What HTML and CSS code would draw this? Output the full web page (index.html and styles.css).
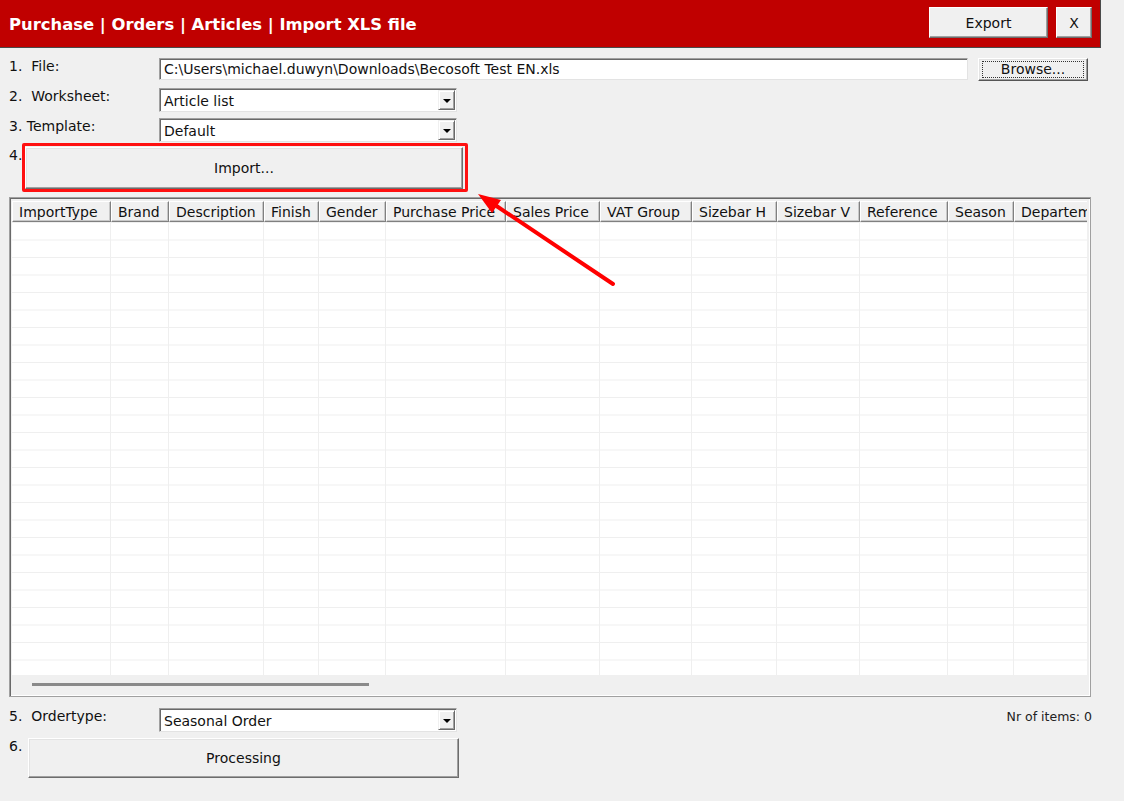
FILE: index.html
```html
<!DOCTYPE html>
<html>

<head>
  <meta charset="utf-8">
  <title>Import XLS file</title>
  <link rel="stylesheet" href="styles.css">
</head>

<body>
  <div class="titlebar">
    <h1 class="title">Purchase | Orders | Articles | Import XLS file</h1>
    <button class="btn btn-export">Export</button>
    <button class="btn btn-close">X</button>
  </div>

  <div class="row row-file">
    <span class="label">1.  File:</span>
    <div class="input input-file">C:\Users\michael.duwyn\Downloads\Becosoft Test EN.xls</div>
    <button class="btn btn-browse"><span class="focus">Browse...</span></button>
  </div>

  <div class="row row-sheet">
    <span class="label">2.  Worksheet:</span>
    <div class="combo"><span class="combo-text">Article list</span><span class="combo-btn"></span></div>
  </div>

  <div class="row row-template">
    <span class="label">3. Template:</span>
    <div class="combo"><span class="combo-text">Default</span><span class="combo-btn"></span></div>
  </div>

  <div class="row row-import">
    <span class="label label-short">4.</span>
    <div class="highlight">
      <button class="btn btn-import">Import...</button>
    </div>
  </div>

  <div class="grid">
    <div class="grid-head">
      <div class="hcell" style="width:99px">ImportType</div>
      <div class="hcell" style="width:58px">Brand</div>
      <div class="hcell" style="width:95px">Description</div>
      <div class="hcell" style="width:55px">Finish</div>
      <div class="hcell" style="width:67px">Gender</div>
      <div class="hcell" style="width:120px">Purchase Price</div>
      <div class="hcell" style="width:94px">Sales Price</div>
      <div class="hcell" style="width:92px">VAT Group</div>
      <div class="hcell" style="width:85px">Sizebar H</div>
      <div class="hcell" style="width:83px">Sizebar V</div>
      <div class="hcell" style="width:88px">Reference</div>
      <div class="hcell" style="width:66px">Season</div>
      <div class="hcell" style="width:100px">Departement</div>
    </div>
    <div class="grid-body">
      <div class="col" style="width:99px"></div>
      <div class="col" style="width:58px"></div>
      <div class="col" style="width:95px"></div>
      <div class="col" style="width:55px"></div>
      <div class="col" style="width:67px"></div>
      <div class="col" style="width:120px"></div>
      <div class="col" style="width:94px"></div>
      <div class="col" style="width:92px"></div>
      <div class="col" style="width:85px"></div>
      <div class="col" style="width:83px"></div>
      <div class="col" style="width:88px"></div>
      <div class="col" style="width:66px"></div>
      <div class="col" style="width:100px"></div>
    </div>
    <div class="grid-scroll">
      <div class="thumb"></div>
    </div>
  </div>

  <div class="row row-order">
    <span class="label">5.  Ordertype:</span>
    <div class="combo"><span class="combo-text">Seasonal Order</span><span class="combo-btn"></span></div>
    <span class="count">Nr of items: 0</span>
  </div>

  <div class="row row-process">
    <span class="label label-short">6.</span>
    <button class="btn btn-process">Processing</button>
  </div>

  <!-- annotation arrow drawn over the screen -->
  <svg class="arrow" width="1124" height="801" viewBox="0 0 1124 801">
    <line x1="613" y1="284" x2="495" y2="205" stroke="#f00" stroke-width="4" stroke-linecap="round" />
    <polygon points="478,194 501,200 492,213" fill="#f00" />
  </svg>
</body>
</html>
```

FILE: styles.css
```css
body {
  margin: 0;
  width: 1124px;
  height: 801px;
  overflow: hidden;
  position: relative;
  background: #f0f0f0;
  font-family: "DejaVu Sans", Verdana, sans-serif;
  font-size: 14px;
  color: #111;
}

.titlebar {
  display: flex;
  align-items: center;
  box-sizing: border-box;
  width: 1101px;
  height: 48px;
  padding-right: 8px;
  background: #c00000;
  border-right: 1px solid #4a4a4a;
  border-bottom: 1px solid #4a4a4a;
}

.title {
  flex: 1;
  margin: 2px 0 0 9px;
  font-size: 16.4px;
  font-weight: bold;
  color: #fff;
}

.btn {
  box-sizing: border-box;
  padding: 0;
  background: #f0f0f0;
  font-family: inherit;
  font-size: 14px;
  color: #111;
  border: 1px solid;
  border-color: #fff #6d6d6d #6d6d6d #fff;
  box-shadow: inset -1px -1px #a0a0a0;
}

.btn-export {
  width: 119px;
  height: 31px;
  margin-bottom: 2px;
}

.btn-close {
  width: 36px;
  height: 31px;
  margin: 0 0 2px 8px;
}

.row {
  display: flex;
  align-items: flex-start;
  padding-left: 9px;
}

.label {
  width: 150px;
  white-space: pre;
}

.label-short {
  width: 13px;
}

.row-file {
  margin-top: 10px;
}

.row-sheet {
  margin-top: 7px;
}

.row-template {
  margin-top: 6px;
}

.row-import {
  margin-top: 1px;
}

.row-import .label {
  padding-top: 4px;
}

.input {
  box-sizing: border-box;
  height: 22px;
  padding: 2px 4px;
  background: #fff;
  border: 1px solid;
  border-color: #a0a0a0 #e3e3e3 #e3e3e3 #a0a0a0;
  box-shadow: inset 1px 1px #696969;
  white-space: nowrap;
}

.input-file {
  width: 809px;
}

.btn-browse {
  width: 110px;
  height: 23px;
  margin-left: 10px;
  border-color: #fff #555 #555 #fff;
  box-shadow: inset -1px -1px #a0a0a0, inset 1px 1px #e3e3e3;
}

.focus {
  display: block;
  margin: 2px 3px;
  border: 1px dotted #333;
  line-height: 15px;
}

.combo {
  box-sizing: border-box;
  display: flex;
  width: 298px;
  height: 24px;
  background: #fff;
  border: 1px solid;
  border-color: #a0a0a0 #e3e3e3 #e3e3e3 #a0a0a0;
  box-shadow: inset 1px 1px #696969;
}

.combo-text {
  flex: 1;
  padding: 4px 4px 0;
}

.combo-btn {
  position: relative;
  box-sizing: border-box;
  width: 17px;
  height: 20px;
  margin: 1px 1px 0 0;
  background: #f0f0f0;
  border: 1px solid;
  border-color: #f0f0f0 #696969 #696969 #f0f0f0;
  box-shadow: inset 1px 1px #fff, inset -1px -1px #a0a0a0;
}

.combo-btn::after {
  content: "";
  position: absolute;
  left: 4px;
  top: 8px;
  border-left: 4px solid transparent;
  border-right: 4px solid transparent;
  border-top: 4px solid #000;
}

.highlight {
  box-sizing: border-box;
  width: 446px;
  height: 49px;
  padding: 1px 2px 0 0;
  border: 3px solid #ff1010;
  border-radius: 2px;
}

.btn-import {
  width: 438px;
  height: 42px;
  border-color: #fff #6d6d6d #6d6d6d #fff;
  box-shadow: inset -1px -1px #a0a0a0, inset 1px 1px #e3e3e3;
}

.grid {
  box-sizing: border-box;
  width: 1082px;
  height: 500px;
  margin: 5px 0 0 9px;
  padding: 3px 2px 0 2px;
  border: 1px solid #a0a0a0;
  box-shadow: inset 1px 1px #696969, inset -1px -1px #fff;
  display: flex;
  flex-direction: column;
  overflow: hidden;
}

.grid-head,
.grid-body {
  display: flex;
  width: 1075px;
  overflow: hidden;
}

.hcell {
  flex: none;
  box-sizing: border-box;
  height: 21px;
  padding: 2px 0 0 6px;
  background: #f0f0f0;
  border: 1px solid;
  border-color: #fff #808080 #808080 #fff;
  box-shadow: inset -1px -1px #c8c8c8;
  white-space: nowrap;
  overflow: hidden;
}

.grid-body {
  height: 453px;
  background: #fff;
}

.col {
  flex: none;
  box-sizing: border-box;
  border-right: 1px solid #efefef;
  background: linear-gradient(to bottom, #fff 16.5px, #efefef 16.5px);
  background-size: 100% 17.5px;
  background-position: 0 1px;
}

.grid-scroll {
  flex: 1;
  position: relative;
}

.thumb {
  position: absolute;
  left: 20px;
  top: 8px;
  width: 337px;
  height: 3px;
  background: #8a8a8a;
}

.row-order {
  margin-top: 11px;
}

.count {
  margin: 1px 0 0 auto;
  padding-right: 32px;
  font-size: 12.5px;
  color: #222;
}

.row-process {
  margin-top: 6px;
}

.row-process .label {
  width: 19px;
}

.btn-process {
  width: 431px;
  height: 40px;
  border-color: #fff #6d6d6d #6d6d6d #fff;
  box-shadow: inset -1px -1px #a0a0a0, inset 1px 1px #e3e3e3;
}

.arrow {
  position: absolute;
  left: 0;
  top: 0;
  pointer-events: none;
}
```
